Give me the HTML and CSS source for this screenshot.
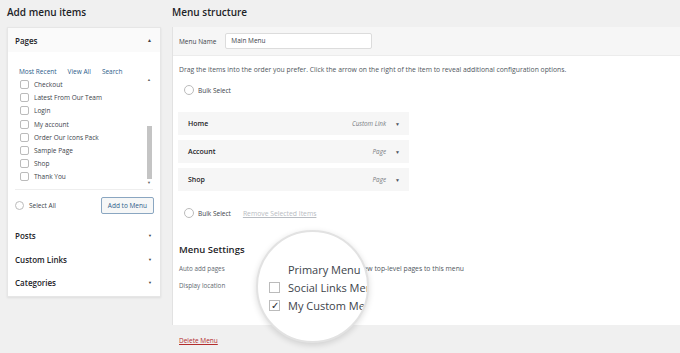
FILE: index.html
```html
<!DOCTYPE html>
<html>
<head>
<meta charset="utf-8">
<link rel="stylesheet" href="styles.css">
</head>
<body>
<div class="page">
  <div class="left">
    <h2 class="title">Add menu items</h2>
    <div class="accordion">
      <div class="acc-head open"><span>Pages</span><span class="arr">&#9650;</span></div>
      <div class="acc-body">
        <div class="tabs"><span class="tab active">Most Recent</span><span class="tab">View All</span><span class="tab">Search</span></div>
        <div class="listbox">
          <ul class="list">
            <li><span class="cb"></span>Checkout</li>
            <li><span class="cb"></span>Latest From Our Team</li>
            <li><span class="cb"></span>Login</li>
            <li><span class="cb"></span>My account</li>
            <li><span class="cb"></span>Order Our Icons Pack</li>
            <li><span class="cb"></span>Sample Page</li>
            <li><span class="cb"></span>Shop</li>
            <li><span class="cb"></span>Thank You</li>
          </ul>
          <div class="scrollbar"><span class="sarr">&#9650;</span><span class="thumb"></span><span class="sarr">&#9660;</span></div>
        </div>
        <div class="actions">
          <label class="selall"><span class="cb"></span>Select All</label>
          <span class="btn">Add to Menu</span>
        </div>
      </div>
      <div class="acc-head"><span>Posts</span><span class="arr small">&#9660;</span></div>
      <div class="acc-head"><span>Custom Links</span><span class="arr small">&#9660;</span></div>
      <div class="acc-head last"><span>Categories</span><span class="arr small">&#9660;</span></div>
    </div>
  </div>
  <div class="right">
    <h2 class="title">Menu structure</h2>
    <div class="panel">
      <div class="namebar"><span class="lbl">Menu Name</span><span class="input">Main Menu</span></div>
      <div class="body">
        <p class="help">Drag the items into the order you prefer. Click the arrow on the right of the item to reveal additional configuration options.</p>
        <label class="bulk first"><span class="cb round"></span>Bulk Select</label>
        <div class="items">
          <div class="item"><span class="iname">Home</span><span class="itype">Custom Link</span><span class="iarr">&#9660;</span></div>
          <div class="item"><span class="iname">Account</span><span class="itype">Page</span><span class="iarr">&#9660;</span></div>
          <div class="item"><span class="iname">Shop</span><span class="itype">Page</span><span class="iarr">&#9660;</span></div>
        </div>
        <div class="bulk2"><label class="bulk"><span class="cb round"></span>Bulk Select</label><span class="remove">Remove Selected Items</span></div>
        <h3 class="settings">Menu Settings</h3>
        <div class="srow auto"><span class="slbl">Auto add pages</span><span class="sval">Add new top-level pages to this menu</span></div>
        <div class="srow"><span class="slbl">Display location</span></div>
      </div>
      <div class="magnifier">
        <div class="mrow"><span class="mcb"></span>Primary Menu</div>
        <div class="mrow"><span class="mcb"></span>Social Links Menu</div>
        <div class="mrow"><span class="mcb checked">&#10003;</span>My Custom Menu</div>
      </div>
    </div>
    <div class="footer"><span class="delete">Delete Menu</span></div>
  </div>
</div>
</body>
</html>
```

FILE: styles.css
```css
* { box-sizing: border-box; }
html, body { margin: 0; padding: 0; }
body {
  background: #f0f0f0;
  font-family: "Open Sans", "Noto Sans", sans-serif;
  color: #1d2327;
  width: 680px;
  height: 353px;
  overflow: hidden;
}
.page { display: flex; gap: 11px; padding-left: 7px; height: 353px; }
.title { font-size: 10px; font-weight: 600; margin: 0; height: 27px; line-height: 24px; color: #1d2327; }
.left { width: 154px; flex: none; }
.accordion { background: #fff; box-shadow: 0 1px 2px rgba(0,0,0,.08); border: 1px solid #e6e6e6; }
.acc-head {
  display: flex; justify-content: space-between; align-items: center;
  height: 23.5px; padding: 0 8px 0 7px; font-size: 8px; font-weight: 600; color: #1d2327;
}
.acc-head.open { height: 24px; background: #fafafa; }
.arr { font-size: 5px; color: #444; }
.arr.small { font-size: 4px; }
.acc-body { padding: 15px 7px 10px 7px; }
.tabs { display: flex; gap: 11px; font-size: 6.5px; color: #2c5d8a; margin-left: 4px; height: 9px; }
.listbox { position: relative; display: flex; height: 114px; border-bottom: 1px solid #eee; }
.list { list-style: none; margin: 0; padding: 2px 0 0 5px; flex: 1; }
.list li { height: 13.2px; display: flex; align-items: center; font-size: 6.5px; color: #3c434a; }
.cb { width: 9px; height: 9px; border: 1px solid #bbb; border-radius: 2px; margin-right: 5px; background: #fff; flex: none; }
.scrollbar { width: 6px; display: flex; flex-direction: column; align-items: center; margin-right: 1px; }
.sarr { font-size: 4px; color: #666; height: 8px; line-height: 8px; }
.thumb { display: block; width: 5px; height: 53px; background: #c4c4c4; margin-top: 42px; }
.actions { display: flex; justify-content: space-between; align-items: center; margin-top: 6px; height: 18px; }
.selall { display: flex; align-items: center; font-size: 6.5px; color: #3c434a; }
.selall .cb { border-radius: 50%; }
.btn { font-size: 6.5px; color: #2c5d8a; border: 1px solid #8aa6c1; background: #f6f7f7; padding: 0 6px; height: 17px; line-height: 15px; border-radius: 2px; margin-right: -1px; }
.acc-head.last { margin-bottom: 1px; }

.right { flex: 1; display: flex; flex-direction: column; }
.panel { position: relative; background: #fff; border-left: 1px solid #e2e2e2; height: 298px; flex: none; }
.namebar { background: #f6f6f6; height: 29px; display: flex; align-items: center; padding-left: 6px; border-bottom: 1px solid #ececec; }
.lbl { font-size: 6.5px; color: #3c434a; margin-right: 9px; }
.input { width: 147px; height: 16px; background: #fff; border: 1px solid #dcdcdc; border-radius: 2px; font-size: 6.5px; line-height: 14px; padding-left: 5px; color: #3c434a; }
.body { padding: 8px 0 0 6px; }
.help { margin: 0; font-size: 6.8px; color: #50575e; height: 12px; line-height: 12px; white-space: nowrap; }
.bulk { display: flex; align-items: center; font-size: 6.5px; color: #3c434a; height: 17px; margin-left: 5px; }
.bulk.first { margin-top: 5.5px; }
.cb.round { border-radius: 50%; width: 10px; height: 10px; margin-right: 4px; }
.items { margin-top: 13.5px; width: 231px; margin-left: -1px; display: flex; flex-direction: column; gap: 5px; }
.item { height: 23px; background: #f6f6f6; display: flex; align-items: center; padding: 0 9px 0 10px; font-size: 7px; }
.iname { flex: 1; font-weight: 600; color: #1d2327; }
.itype { font-size: 6.3px; color: #787c82; margin-right: 9px; font-style: italic; }
.iarr { font-size: 5px; color: #50575e; }
.bulk2 { display: flex; align-items: center; margin-top: 13.5px; }
.remove { font-size: 6.8px; color: #b8bcc2; text-decoration: underline; margin-left: 12px; }
.settings { margin: 21.5px 0 0 0; font-size: 9.5px; font-weight: 600; height: 14px; line-height: 14px; }
.srow { display: flex; height: 17px; align-items: center; }
.srow.auto { margin-top: 2.5px; }
.slbl { font-size: 6.3px; color: #646970; width: 166px; flex: none; }
.sval { font-size: 6.8px; color: #50575e; }
.footer { height: 28px; padding-left: 7px; }
.delete { font-size: 6.5px; color: #b32d2e; text-decoration: underline; line-height: 32px; }
.magnifier {
  position: absolute; left: 83px; top: 203px; width: 113px; height: 113px; border-radius: 50%;
  background: #fff; border: 2px solid #e2e2e2; box-shadow: 0 2px 6px rgba(0,0,0,.14);
  overflow: hidden; padding: 28px 0 0 11px; white-space: nowrap;
}
.mrow { display: flex; align-items: center; font-size: 11px; color: #3c434a; height: 18px; }
.mcb { width: 11px; height: 11px; border: 1px solid #bbb; margin-right: 8px; flex: none; font-size: 10px; line-height: 9px; color: #1d2327; text-align: center; }
.mrow:first-child .mcb { visibility: hidden; }
```
